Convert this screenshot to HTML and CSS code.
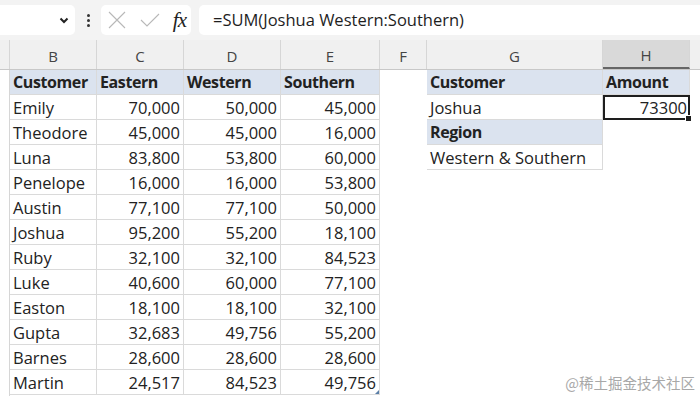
FILE: index.html
```html
<!DOCTYPE html>
<html lang="en">
<head>
    <meta charset="UTF-8">
    <title>SUM intersection</title>
    <link rel="stylesheet" href="styles.css">
</head>
<body>
    <div class="toolbar">
        <div class="name-box">
            <svg class="chevron" width="10" height="7" viewBox="0 0 10 7"><path d="M1.5 1.5 L5 5 L8.5 1.5" fill="none" stroke="#222" stroke-width="2"/></svg>
        </div>
        <div class="dots"><span></span><span></span><span></span></div>
        <div class="fx-box">
            <svg width="20" height="20" viewBox="0 0 20 20"><path d="M2 2 L18 18 M18 2 L2 18" stroke="#b8b8b8" stroke-width="1.1"/></svg>
            <svg width="22" height="18" viewBox="0 0 22 18"><path d="M2 9 L8 15 L20 3" fill="none" stroke="#b8b8b8" stroke-width="1.1"/></svg>
            <span class="fx">fx</span>
        </div>
        <div class="formula">=SUM(Joshua Western:Southern)</div>
    </div>

    <div class="sheet">
        <div class="col-heads">
            <div class="ch w-a"></div>
            <div class="ch w-b">B</div>
            <div class="ch w-c">C</div>
            <div class="ch w-d">D</div>
            <div class="ch w-e">E</div>
            <div class="ch w-f">F</div>
            <div class="ch w-g">G</div>
            <div class="ch w-h selected">H</div>
            <div class="ch rest"></div>
        </div>

        <div class="body">
            <div class="stub"></div>

            <div class="data">
                <div class="hd">Customer</div><div class="hd">Eastern</div><div class="hd">Western</div><div class="hd">Southern</div>
                <div>Emily</div><div class="n">70,000</div><div class="n">50,000</div><div class="n">45,000</div>
                <div>Theodore</div><div class="n">45,000</div><div class="n">45,000</div><div class="n">16,000</div>
                <div>Luna</div><div class="n">83,800</div><div class="n">53,800</div><div class="n">60,000</div>
                <div>Penelope</div><div class="n">16,000</div><div class="n">16,000</div><div class="n">53,800</div>
                <div>Austin</div><div class="n">77,100</div><div class="n">77,100</div><div class="n">50,000</div>
                <div>Joshua</div><div class="n">95,200</div><div class="n">55,200</div><div class="n">18,100</div>
                <div>Ruby</div><div class="n">32,100</div><div class="n">32,100</div><div class="n">84,523</div>
                <div>Luke</div><div class="n">40,600</div><div class="n">60,000</div><div class="n">77,100</div>
                <div>Easton</div><div class="n">18,100</div><div class="n">18,100</div><div class="n">32,100</div>
                <div>Gupta</div><div class="n">32,683</div><div class="n">49,756</div><div class="n">55,200</div>
                <div>Barnes</div><div class="n">28,600</div><div class="n">28,600</div><div class="n">28,600</div>
                <div>Martin</div><div class="n">24,517</div><div class="n">84,523</div><div class="n last">49,756</div>
            </div>

            <div class="gap"></div>

            <div class="lookup">
                <div class="hd">Customer</div><div class="hd">Amount</div>
                <div class="cell">Joshua</div><div class="n active">73300</div>
                <div class="hd">Region</div><div class="blank"></div>
                <div class="cell">Western &amp; Southern</div><div class="blank"></div>
            </div>
        </div>
    </div>

    <div class="watermark">@稀土掘金技术社区</div>
</body>
</html>
```

FILE: styles.css
```css
body {
    margin: 0;
    width: 700px;
    height: 401px;
    overflow: hidden;
    position: relative;
    background: #fff;
    font-family: 'Open Sans', 'Noto Sans', sans-serif;
    color: #222;
}
.toolbar {
    height: 40px;
    background: #f3f3f3;
    display: flex;
    align-items: center;
    box-sizing: border-box;
}
.name-box {
    width: 75px;
    height: 30px;
    background: #fff;
    border-radius: 0 5px 5px 0;
    display: flex;
    align-items: center;
    justify-content: flex-end;
    padding-right: 6px;
    box-sizing: border-box;
}
.dots {
    width: 26px;
    display: flex;
    flex-direction: column;
    align-items: center;
    gap: 2px;
}
.dots span {
    width: 3px;
    height: 3px;
    border-radius: 50%;
    background: #333;
}
.fx-box {
    width: 90px;
    height: 30px;
    background: #fff;
    border-radius: 5px;
    display: flex;
    align-items: center;
    justify-content: space-between;
    padding: 0 5px 0 6px;
    box-sizing: border-box;
}
.fx {
    font-family: 'Liberation Serif', serif;
    font-style: italic;
    font-size: 21px;
    color: #222;
    letter-spacing: -1px;
    line-height: 30px;
}
.formula {
    flex: 1;
    margin-left: 8px;
    height: 30px;
    background: #fff;
    border-radius: 5px 0 0 5px;
    line-height: 30px;
    padding-left: 14px;
    font-size: 16.5px;
    color: #1e1e1e;
}
.col-heads {
    display: flex;
    height: 30px;
    background: #f0f0f0;
    border-bottom: 1px solid #c8c8c8;
    box-sizing: border-box;
}
.ch {
    border-right: 1px solid #d6d6d6;
    box-sizing: border-box;
    text-align: center;
    line-height: 33px;
    font-size: 15px;
    color: #444;
}
.ch.selected {
    background: #d9d9d9;
    border-bottom: 2px solid #666;
    line-height: 31px;
}
.ch.rest {
    flex: 1;
    border-right: none;
}
.w-a { width: 10px; }
.w-b { width: 87px; }
.w-c { width: 87px; }
.w-d { width: 97px; }
.w-e { width: 99px; }
.w-f { width: 47px; }
.w-g { width: 176px; }
.w-h { width: 87px; }

.body {
    display: flex;
    align-items: flex-start;
}
.stub {
    width: 10px;
    height: 326px;
    border-right: 1px solid #d6d6d6;
    box-sizing: border-box;
}
.data {
    display: grid;
    grid-template-columns: 87px 87px 97px 99px;
    grid-auto-rows: 25px;
    font-size: 16.5px;
}
.data > div, .lookup > div {
    border-right: 1px solid #dadada;
    border-bottom: 1px solid #dadada;
    box-sizing: border-box;
    padding: 0 3px;
    line-height: 25px;
    white-space: nowrap;
}
.hd {
    background: #dbe3ef;
    font-weight: 700;
    font-size: 16px;
    letter-spacing: -0.4px;
    color: #222;
}
.n {
    text-align: right;
}
.last {
    position: relative;
}
.last::after {
    content: "";
    position: absolute;
    right: 0;
    bottom: 0;
    border-left: 4px solid transparent;
    border-bottom: 4px solid #5a7fa8;
}
.gap {
    width: 47px;
}
.lookup {
    display: grid;
    grid-template-columns: 176px 87px;
    grid-auto-rows: 25px;
    font-size: 16.5px;
}
.lookup > .blank {
    border: none;
}
.lookup > .active {
    border: 2px solid #1e1e1e;
    line-height: 21px;
    padding-right: 1px;
    position: relative;
}
.active::after {
    content: "";
    position: absolute;
    right: -4px;
    bottom: -4px;
    width: 5px;
    height: 5px;
    background: #1e1e1e;
    border: 1px solid #fff;
}
.watermark {
    position: absolute;
    right: 5px;
    bottom: 8px;
    font-family: 'Noto Sans CJK SC', sans-serif;
    font-size: 14.5px;
    color: #a8a8a8;
}
```
